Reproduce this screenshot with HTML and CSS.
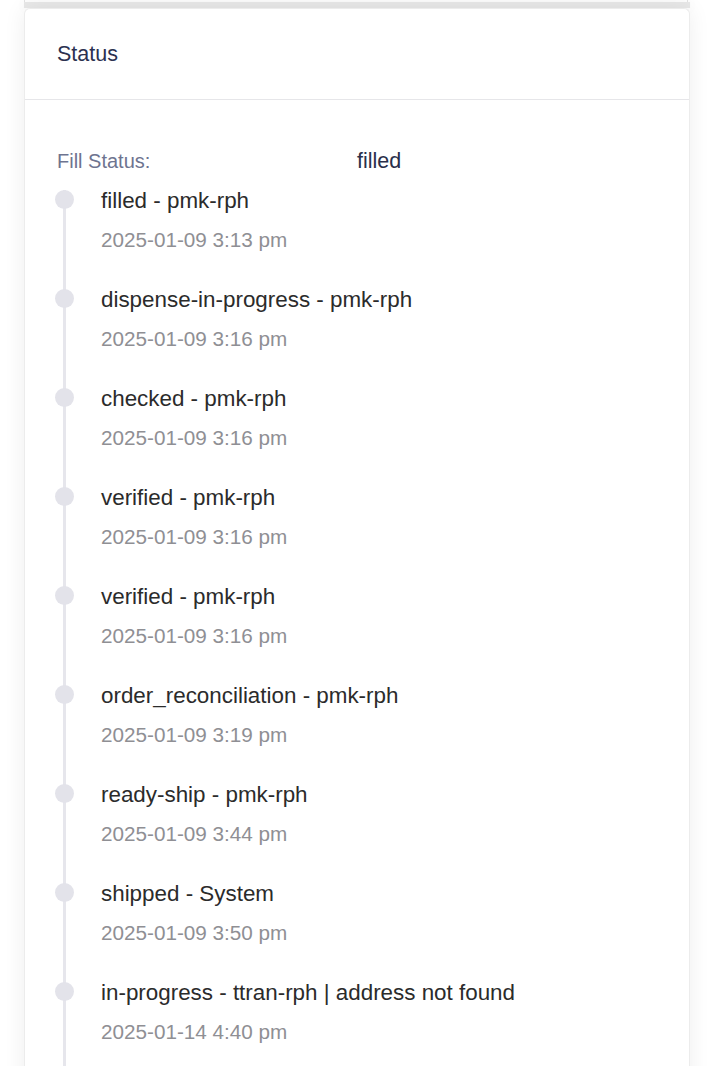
FILE: index.html
```html
<!DOCTYPE html>
<html>
<head>
<meta charset="utf-8">
<link rel="stylesheet" href="styles.css">
</head>
<body>
<div class="page">
  <div class="prev-card"></div>
  <div class="gap-band"></div>
  <section class="card">
    <header class="card-header">
      <h2 class="card-title">Status</h2>
    </header>
    <div class="card-body">
      <div class="fill-row">
        <span class="fill-label">Fill Status:</span>
        <span class="fill-value">filled</span>
      </div>
      <ul class="timeline">
        <li class="event"><span class="dot"></span><div class="event-text"><div class="event-title">filled - pmk-rph</div><div class="event-date">2025-01-09 3:13 pm</div></div></li>
        <li class="event"><span class="dot"></span><div class="event-text"><div class="event-title">dispense-in-progress - pmk-rph</div><div class="event-date">2025-01-09 3:16 pm</div></div></li>
        <li class="event"><span class="dot"></span><div class="event-text"><div class="event-title">checked - pmk-rph</div><div class="event-date">2025-01-09 3:16 pm</div></div></li>
        <li class="event"><span class="dot"></span><div class="event-text"><div class="event-title">verified - pmk-rph</div><div class="event-date">2025-01-09 3:16 pm</div></div></li>
        <li class="event"><span class="dot"></span><div class="event-text"><div class="event-title">verified - pmk-rph</div><div class="event-date">2025-01-09 3:16 pm</div></div></li>
        <li class="event"><span class="dot"></span><div class="event-text"><div class="event-title">order_reconciliation - pmk-rph</div><div class="event-date">2025-01-09 3:19 pm</div></div></li>
        <li class="event"><span class="dot"></span><div class="event-text"><div class="event-title">ready-ship - pmk-rph</div><div class="event-date">2025-01-09 3:44 pm</div></div></li>
        <li class="event"><span class="dot"></span><div class="event-text"><div class="event-title">shipped - System</div><div class="event-date">2025-01-09 3:50 pm</div></div></li>
        <li class="event"><span class="dot"></span><div class="event-text"><div class="event-title">in-progress - ttran-rph | address not found</div><div class="event-date">2025-01-14 4:40 pm</div></div></li>
      </ul>
    </div>
  </section>
</div>
</body>
</html>
```

FILE: styles.css
```css
html, body {
  margin: 0;
  padding: 0;
  background: #ffffff;
  font-family: "Liberation Sans", Arial, sans-serif;
  overflow: hidden;
}

.page {
  width: 714px;
  height: 1066px;
  overflow: hidden;
}

.prev-card {
  margin: 0 26px 0 24px;
  height: 2px;
  background: #ffffff;
  border-left: 1px solid #e4e4e4;
  border-right: 1px solid #e4e4e4;
}

.gap-band {
  margin: 0 24px 0 24px;
  height: 6px;
  background: #e8e8e8;
  box-shadow: 0 0 14px rgba(0, 0, 0, 0.05);
}

.card {
  margin: 0 24px 0 24px;
  width: 666px;
  background: #ffffff;
  border: 1px solid #ececec;
  border-bottom: none;
  border-radius: 6px 6px 0 0;
  box-shadow: 0 0 22px rgba(0, 0, 0, 0.07);
  height: 1100px;
  box-sizing: border-box;
}

.card-header {
  height: 90px;
  padding-left: 32px;
  display: flex;
  align-items: center;
  border-bottom: 1px solid #e6e6e9;
}

.card-title {
  margin: 0;
  font-weight: normal;
  font-size: 21.5px;
  color: #2c3150;
  padding-top: 1px;
}

.card-body {
  padding: 47px 0 0 32px;
}

.fill-row {
  display: flex;
  align-items: center;
  height: 28px;
}

.fill-label {
  width: 300px;
  font-size: 20px;
  color: #6e7490;
}

.fill-value {
  font-size: 21.5px;
  color: #2a2f4a;
}

.timeline {
  list-style: none;
  margin: 11px 0 0 0;
  padding: 0;
  position: relative;
  height: 900px;
}

.timeline::before {
  content: "";
  position: absolute;
  left: 5.5px;
  top: 4px;
  bottom: 0;
  width: 3px;
  background: #e6e6ec;
}

.event {
  display: flex;
  align-items: flex-start;
  height: 99px;
  position: relative;
}

.dot {
  flex: none;
  width: 19px;
  height: 19px;
  border-radius: 50%;
  background: #e3e3ea;
  margin-top: 3.5px;
  margin-left: -2.5px;
  position: relative;
}

.event-text {
  margin-left: 27.5px;
  padding-top: 1px;
}

.event-title {
  font-size: 22.4px;
  line-height: 28px;
  color: #2b2b2b;
  white-space: nowrap;
}

.event-date {
  margin-top: 11px;
  font-size: 20.7px;
  line-height: 28px;
  color: #8f8f94;
  white-space: nowrap;
}
```
